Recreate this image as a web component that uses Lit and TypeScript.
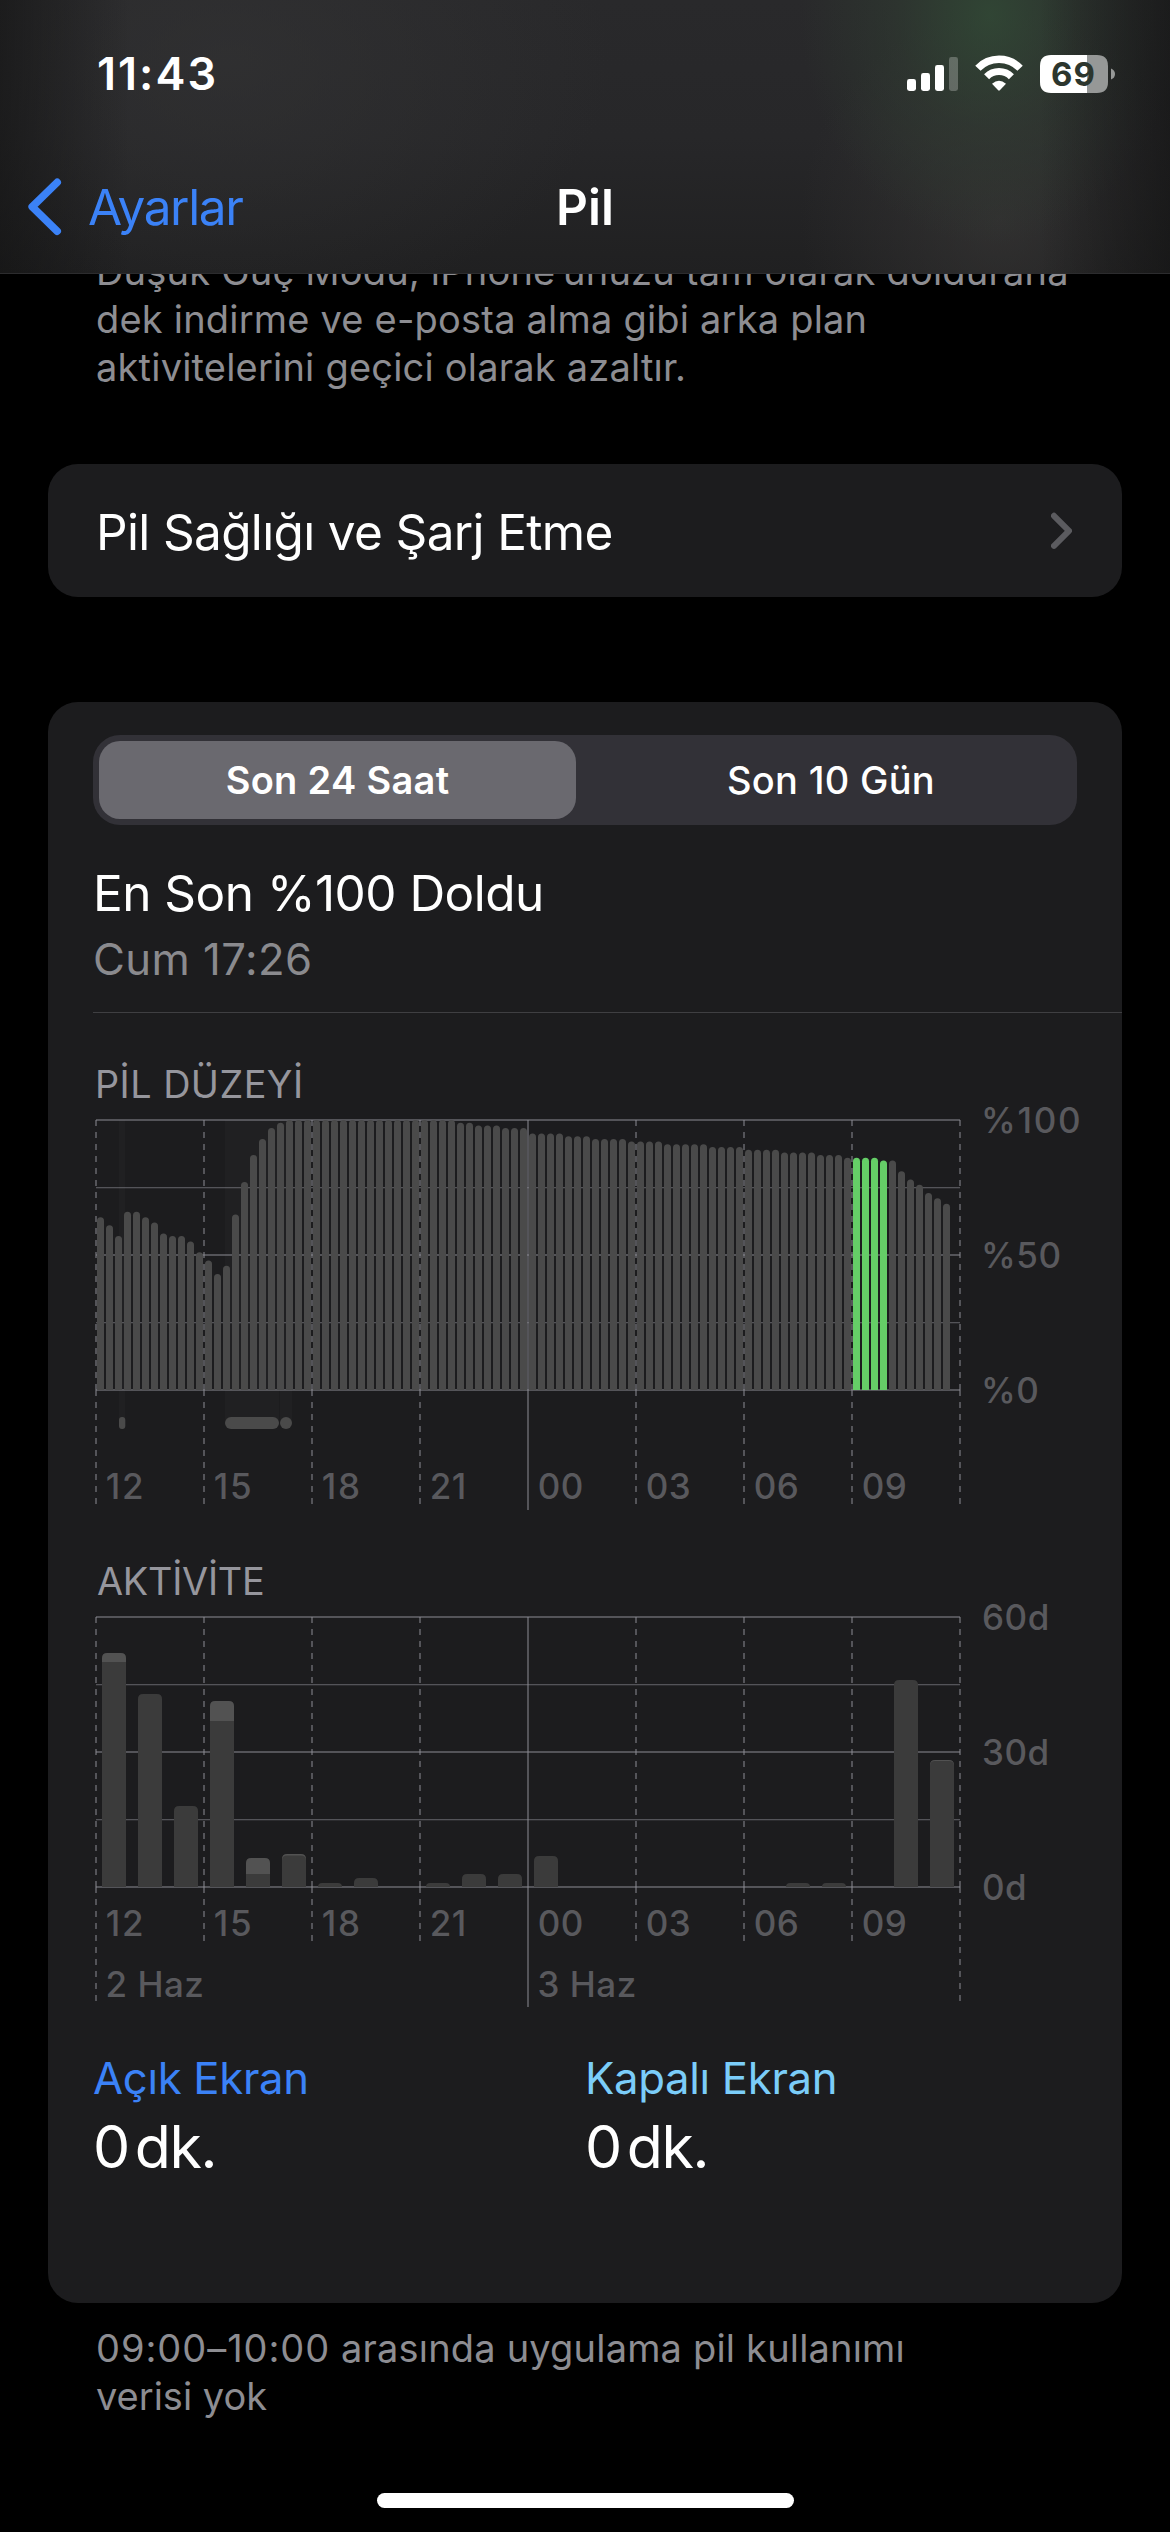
import { LitElement, html, svg, css } from "lit";
import { customElement } from "lit/decorators.js";

const HOURS = ["12", "15", "18", "21", "00", "03", "06", "09"];

/* Battery percentage, one entry per 15 minutes */
const repeat = (value: number, times: number): number[] => Array(times).fill(value);
const LEVELS: number[] = [
  64, 61, 57, 66, 66, 64, 62, 58, 57, 57, 55, 51, 48, 43, 46, 65, 77, 87, 93, 97, 99,
  ...repeat(100, 19),
  99, 99, 98, 98, 98, 97, 97, 97,
  ...repeat(95, 4), ...repeat(94, 3), ...repeat(93, 4), ...repeat(92, 4), ...repeat(91, 5),
  ...repeat(90, 4), ...repeat(89, 4), ...repeat(88, 4), ...repeat(87, 3), ...repeat(86, 4),
  85, 85, 81, 78, 76, 73, 71, 69,
];
const SELECTED_FROM = 84;
const SELECTED_TO = 87;

/* Activity per hour in chart pixels: total height and the screen-off share on top */
const ACTIVITY: [number, number][] = [
  [234, 9], [193, 0], [81, 0], [186, 20], [29, 16], [33, 1.5], [4, 0], [9, 0], [0, 0],
  [4, 0], [13, 0], [13, 0], [31, 0], [0, 0], [0, 0], [0, 0], [0, 0], [0, 0], [0, 0],
  [4, 0], [4, 0], [0, 0], [207, 0], [127, 1],
];

const roundedTop = (x: number, w: number, h: number, r: number): string => {
  const k = Math.min(r, h);
  const top = 270 - h;
  return `M${x} 270V${top + k}Q${x} ${top} ${x + k} ${top}H${x + w - k}Q${x + w} ${top} ${x + w} ${top + k}V270Z`;
};

const chartStyles = css`
  :host { display: block; }
  svg { display: block; overflow: visible; }
  .grid { fill: rgba(140, 140, 147, 0.5); }
  .dash { stroke: rgba(140, 140, 147, 0.5); stroke-width: 2; stroke-dasharray: 6 6; }
  .solid { stroke: rgba(140, 140, 147, 0.5); stroke-width: 2; }
  .tick { fill: #59595d; font: 500 35px Inter, "Liberation Sans", sans-serif; letter-spacing: 0.5px; }
  .wide { letter-spacing: 1.7px; }
  .level { fill: #4a4a4a; }
  .selected { fill: #65ce67; }
  .charging { fill: #202022; }
  .screen-on { fill: #3b3b3b; }
  .screen-off { fill: #525252; }
`;

const horizontals = () => svg`
  <rect class="grid" x="0" y="-1" width="864" height="2"></rect>
  <rect class="grid" x="0" y="67" width="864" height="1.3"></rect>
  <rect class="grid" x="0" y="134" width="864" height="2"></rect>
  <rect class="grid" x="0" y="202" width="864" height="1.3"></rect>
  <rect class="grid" x="0" y="269" width="864" height="2"></rect>`;

const verticals = (end: number, edgeEnd: number, solidEnd: number) =>
  Array.from({ length: 9 }, (_, i) => {
    const x = i * 108;
    if (i === 4) return svg`<line class="solid" x1=${x} x2=${x} y1="0" y2=${solidEnd}></line>`;
    const bottom = i === 0 || i === 8 ? edgeEnd : end;
    return svg`
      <line class="dash" x1=${x} x2=${x} y1="0" y2="270"></line>
      <line class="dash" x1=${x} x2=${x} y1="270" y2=${bottom}></line>`;
  });

const hourLabels = (baseline: number) =>
  HOURS.map(
    (h, i) => svg`<text class="tick ${h.startsWith("1") ? "wide" : ""}" x=${i * 108 + 9.7} y=${baseline}>${h}</text>`,
  );

@customElement("battery-level-chart")
export class BatteryLevelChart extends LitElement {
  static styles = chartStyles;

  render() {
    return html`<svg width="1029" height="405" viewBox="-3 -13 1029 405">
      <rect class="charging" x="23" y="0" width="6" height="300"></rect>
      <rect class="charging" x="129" y="0" width="54" height="300"></rect>
      <rect class="charging" x="184" y="0" width="12" height="300"></rect>
      ${horizontals()}
      ${LEVELS.map(
        (v, i) => svg`<path class=${i >= SELECTED_FROM && i <= SELECTED_TO ? "selected" : "level"}
          d=${roundedTop(1 + i * 9, 7, v * 2.7, 3.5)}></path>`,
      )}
      ${verticals(384, 384, 390)}
      <rect class="level" x="23" y="297" width="6.3" height="12" rx="3"></rect>
      <rect class="level" x="129" y="297" width="54" height="12" rx="6"></rect>
      <rect class="level" x="184" y="297" width="12" height="12" rx="6"></rect>
      ${hourLabels(379)}
      <text class="tick wide" x="885" y="13">%100</text>
      <text class="tick" x="885" y="148">%50</text>
      <text class="tick" x="885" y="283">%0</text>
    </svg>`;
  }
}

@customElement("activity-chart")
export class ActivityChart extends LitElement {
  static styles = chartStyles;

  render() {
    return html`<svg width="1029" height="404" viewBox="-3 -13 1029 404">
      ${horizontals()}
      ${verticals(324, 384, 390)}
      ${ACTIVITY.map(([h, off], i) => {
        if (!h) return null;
        const x = 6 + i * 36;
        return svg`
          <path class=${off ? "screen-off" : "screen-on"} d=${roundedTop(x, 24, h, 5)}></path>
          ${off > 2
            ? svg`<rect class="screen-on" x=${x} y=${270 - h + off} width="24" height=${h - off}></rect>`
            : off
              ? svg`<path class="screen-on" d=${roundedTop(x, 24, h - off, 5)}></path>`
              : null}`;
      })}
      ${hourLabels(319)}
      <text class="tick" x="9.5" y="380">2 Haz</text>
      <text class="tick" x="441.5" y="380">3 Haz</text>
      <text class="tick" x="886" y="13">60d</text>
      <text class="tick" x="886" y="148">30d</text>
      <text class="tick" x="886" y="283">0d</text>
    </svg>`;
  }
}

@customElement("status-bar")
export class StatusBar extends LitElement {
  static styles = css`
    :host { display: flex; justify-content: space-between; height: 97px; padding: 44px 55px 0 97px; }
    .time { font-size: 45px; line-height: 60px; font-weight: 600; letter-spacing: 2px; }
    .icons { display: flex; gap: 16px; padding-top: 11px; }
    svg { display: block; }
    .percent { font: 700 33px Inter, "Liberation Sans", sans-serif; fill: #2c362e; letter-spacing: 1px; }
  `;

  render() {
    return html`
      <div class="time">11:43</div>
      <div class="icons">
        <svg width="51" height="36" viewBox="0 0 51 36" fill="#fff">
          <rect x="0" y="24" width="9" height="12" rx="2.4"></rect>
          <rect x="14" y="18" width="9" height="18" rx="2.4"></rect>
          <rect x="28" y="10" width="9" height="26" rx="2.4"></rect>
          <rect x="42" y="2" width="9" height="34" rx="2.4" opacity="0.25"></rect>
        </svg>
        <svg width="50" height="36" viewBox="0 0 50 36" fill="none" stroke="#fff">
          <path d="M3.9 13.2A29.3 29.3 0 0 1 46.1 13.2" stroke-width="7.4"></path>
          <path d="M12.6 21.7A17.3 17.3 0 0 1 37.4 21.7" stroke-width="7"></path>
          <path d="M18 28.8Q25 22.7 32 28.8L25.8 35.3Q25 36.1 24.2 35.3Z" fill="#fff" stroke="none"></path>
        </svg>
        <svg width="75" height="38" viewBox="0 0 75 38">
          <path d="M47 0H57Q68 0 68 11V27Q68 38 57 38H47Z" fill="#969897"></path>
          <path d="M47 0H11Q0 0 0 11V27Q0 38 11 38H47Z" fill="#fff"></path>
          <path d="M71 13.5Q75 15 75 19T71 24.5Z" fill="#969897"></path>
          <text class="percent" x="11" y="31">69</text>
        </svg>
      </div>
    `;
  }
}

@customElement("app-root")
export class AppRoot extends LitElement {
  static styles = css`
    :host {
      display: block;
      width: 1170px;
      height: 2532px;
      overflow: hidden;
      background: #000;
      color: #fff;
      font-family: Inter, "Liberation Sans", sans-serif;
    }
    svg { display: block; }
    .header {
      position: relative;
      z-index: 1;
      height: 273px;
      border-bottom: 1px solid #2c2c2e;
      background:
        linear-gradient(to right, rgba(18, 18, 18, 0.6) 0, rgba(18, 18, 18, 0) 130px, rgba(18, 18, 18, 0) 1040px, rgba(18, 18, 18, 0.6) 1170px),
        radial-gradient(ellipse 190px 230px at 990px 15px, rgba(50, 74, 54, 0.85), rgba(50, 66, 52, 0.42) 50%, rgba(50, 58, 51, 0)),
        radial-gradient(ellipse 200px 210px at 1000px 220px, rgba(58, 57, 56, 0.6), rgba(56, 54, 54, 0)),
        radial-gradient(ellipse 380px 260px at 230px 60px, rgba(52, 52, 53, 0.6), rgba(52, 52, 53, 0)),
        linear-gradient(#29292b, #272729 50%, #202021);
    }
    .nav {
      display: grid;
      grid-template-columns: 1fr auto 1fr;
      align-items: center;
      height: 132px;
      padding: 0 28px;
      font-size: 49.5px;
      line-height: 60px;
    }
    .back { display: flex; align-items: center; gap: 26px; color: #3b82f7; letter-spacing: -1.35px; }
    .title { font-weight: 600; }
    .note { margin: 0; padding-left: 96px; font-size: 38px; line-height: 48px; letter-spacing: 0.2px; color: #8d8d92; white-space: nowrap; }
    .intro { margin-top: -27px; }
    .card { box-sizing: border-box; margin: 0 48px; border-radius: 30px; background: #1c1c1e; }
    .row {
      display: flex;
      justify-content: space-between;
      align-items: center;
      height: 133px;
      margin-top: 73px;
      padding: 0 50px 0 48px;
      font-size: 49.5px;
      line-height: 60px;
      letter-spacing: -0.65px;
    }
    .row-label { padding-top: 3px; }
    .usage { height: 1601px; margin-top: 105px; padding: 33px 0 0 45px; }
    .segments {
      display: grid;
      grid-template-columns: 1fr 1fr;
      width: 984px;
      height: 90px;
      border-radius: 27px;
      background: #323137;
      font-size: 38px;
      line-height: 46px;
      letter-spacing: 0.3px;
      font-weight: 500;
    }
    .segment { display: flex; align-items: center; justify-content: center; }
    .active { margin: 6px 9px 6px 6px; border-radius: 21px; background: #6a696f; font-weight: 600; }
    .charge-title { margin-top: 38px; font-size: 49.5px; line-height: 60px; letter-spacing: -0.52px; }
    .charge-time { margin-top: 9.5px; font-size: 43.7px; line-height: 54px; letter-spacing: 0.43px; color: #8a8a8e; }
    .divider { height: 1px; margin-top: 25.5px; background: #3f3f42; }
    .chart-title { margin-top: 48px; padding-left: 2px; font-size: 37.8px; line-height: 46px; letter-spacing: 0.46px; color: #96969d; }
    .activity-title { margin-top: 46px; padding-left: 4px; letter-spacing: -0.24px; }
    .totals { display: grid; grid-template-columns: 1fr 1fr; width: 984px; margin-top: 43.5px; }
    .total-name { font-size: 43.7px; line-height: 54px; letter-spacing: -0.32px; }
    .on { color: #3b82f7; }
    .off { color: #7bcdf9; }
    .total-value { display: flex; gap: 4.5px; margin-top: 5px; font-size: 59px; line-height: 72px; }
    .unit { letter-spacing: -1.4px; }
    .foot { margin-top: 21px; letter-spacing: 0.18px; }
    .range { letter-spacing: 0.95px; }
    .tight { letter-spacing: 0; }
    .home { width: 417px; height: 15px; margin: 73px auto 0; border-radius: 8px; background: #fff; }
  `;

  private total(name: string, tone: string) {
    return html`<div>
      <div class="total-name ${tone}">${name}</div>
      <div class="total-value"><span>0</span><span class="unit">dk.</span></div>
    </div>`;
  }

  render() {
    return html`
      <div class="header">
        <status-bar></status-bar>
        <div class="nav">
          <div class="back">
            <svg width="34" height="58" viewBox="0 0 34 58" fill="none" stroke="#3b82f7" stroke-width="7.6" stroke-linecap="round" stroke-linejoin="round">
              <path d="M29.2 4.4L4.2 28.8L29.2 53.2"></path>
            </svg>
            <span>Ayarlar</span>
          </div>
          <div class="title">Pil</div>
        </div>
      </div>
      <p class="note intro">Düşük Güç Modu, iPhone’unuzu tam olarak doldurana<br />dek indirme ve e-posta alma gibi arka plan<br />aktivitelerini geçici olarak azaltır.</p>
      <div class="card row">
        <span class="row-label">Pil Sağlığı ve Şarj Etme</span>
        <svg width="21" height="38" viewBox="0 0 21 38" fill="none" stroke="#5b5b5f" stroke-width="6" stroke-linecap="round" stroke-linejoin="round">
          <path d="M3 3.8L18 18.8L3 33.8"></path>
        </svg>
      </div>
      <div class="card usage">
        <div class="segments">
          <div class="segment active">Son 24 Saat</div>
          <div class="segment">Son 10 Gün</div>
        </div>
        <div class="charge-title">En Son %100 Doldu</div>
        <div class="charge-time">Cum 17:26</div>
        <div class="divider"></div>
        <div class="chart-title">PİL DÜZEYİ</div>
        <battery-level-chart></battery-level-chart>
        <div class="chart-title activity-title">AKTİVİTE</div>
        <activity-chart></activity-chart>
        <div class="totals">${this.total("Açık Ekran", "on")}${this.total("Kapalı Ekran", "off")}</div>
      </div>
      <p class="note foot"><span class="range">09:00–10:00</span> arasında uygulama pil kullanımı<br /><span class="tight">verisi yok</span></p>
      <div class="home"></div>
    `;
  }
}
